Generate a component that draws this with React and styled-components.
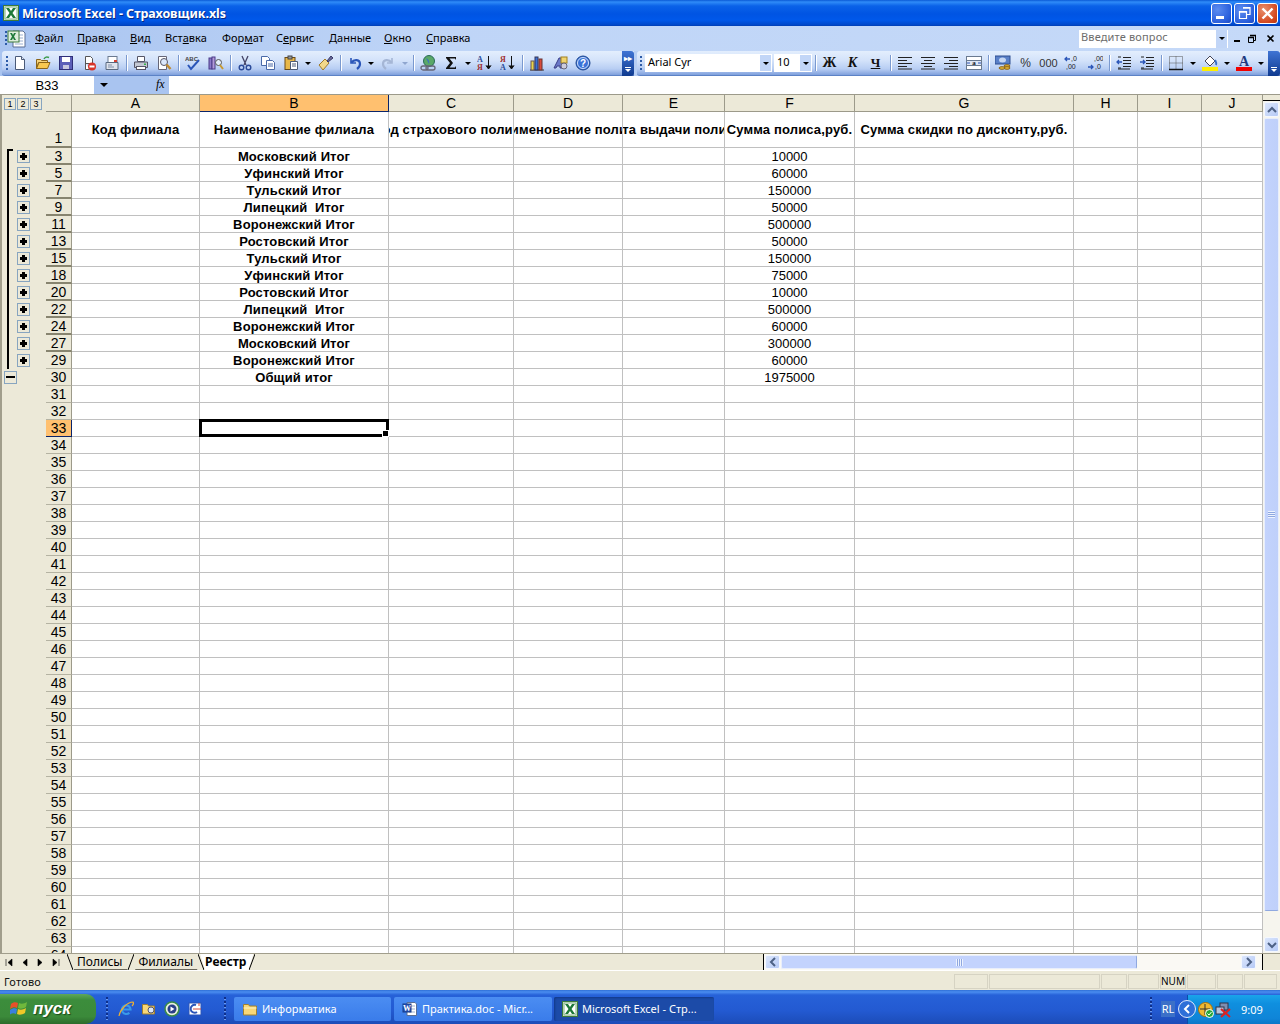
import React from 'react';
import styled, { createGlobalStyle } from 'styled-components';

const GlobalStyle = createGlobalStyle`
  html, body { margin: 0; padding: 0; background: #ece9d8; overflow: hidden; }
  * { box-sizing: border-box; }
`;

const UI = '"Noto Sans", "Liberation Sans", sans-serif';
const CELL = '"Liberation Sans", Arial, sans-serif';

const COLS = [
  { id: 'A', w: 128 }, { id: 'B', w: 189 }, { id: 'C', w: 125 }, { id: 'D', w: 109 }, { id: 'E', w: 102 },
  { id: 'F', w: 130 }, { id: 'G', w: 219 }, { id: 'H', w: 64 }, { id: 'I', w: 64 }, { id: 'J', w: 61 },
];

const SUMMARY = [
  [3, 'Московский Итог', '10000'], [5, 'Уфинский Итог', '60000'], [7, 'Тульский Итог', '150000'],
  [9, 'Липецкий  Итог', '50000'], [11, 'Воронежский Итог', '500000'], [13, 'Ростовский Итог', '50000'],
  [15, 'Тульский Итог', '150000'], [18, 'Уфинский Итог', '75000'], [20, 'Ростовский Итог', '10000'],
  [22, 'Липецкий  Итог', '500000'], [24, 'Воронежский Итог', '60000'], [27, 'Московский Итог', '300000'],
  [29, 'Воронежский Итог', '60000'],
];

const Page = styled.div`
  width: 1280px;
  height: 1024px;
  display: flex;
  flex-direction: column;
  overflow: hidden;
  background: #ece9d8;
`;

/* title bar */
const TitleBar = styled.div`
  height: 26px;
  flex: none;
  display: flex;
  align-items: center;
  padding: 0 2px 0 3px;
  background: linear-gradient(180deg, #0a5ad6 0, #2f8cf8 2px, #0a62e8 6px, #0054e3 14px, #0058ea 20px, #0047c8 25px, #003cb0 26px);
`;
const TitleText = styled.div`
  margin-left: 3px;
  flex: 1;
  color: #fff;
  font: bold 12.5px ${UI};
  letter-spacing: -0.04px;
  text-shadow: 1px 1px 0 #0a2a80;
`;
const WinButton = styled.div`
  width: 21px;
  height: 21px;
  margin-left: 2px;
  border: 1px solid #fff;
  border-radius: 3px;
  display: flex;
  align-items: center;
  justify-content: center;
  background: ${p => p.$close
    ? 'radial-gradient(circle at 30% 30%, #e8906e, #d4481f 70%, #b8350f)'
    : 'radial-gradient(circle at 30% 30%, #5c8cf0, #2a5fdc 70%, #1c48c0)'};
`;

/* menu */
const MenuBar = styled.div`
  height: 25px;
  flex: none;
  display: flex;
  align-items: center;
  padding: 0 4px 0 5px;
  background: linear-gradient(90deg, #a9c4f0 0, #bfd5f7 35%, #c5d9f8 100%);
  font: 11px ${UI};
  color: #000;
`;
const Grip = styled.div`
  width: 2px;
  height: ${p => p.$h || 15}px;
  flex: none;
  background: repeating-linear-gradient(180deg, #2c5ba8 0, #2c5ba8 2px, transparent 2px, transparent 4px);
`;
const MenuList = styled.div`
  display: flex;
  margin-left: 8px;
  margin-bottom: 2px;
`;
const MenuItem = styled.span`
  width: ${p => p.$w}px;
  flex: none;
  line-height: 15px;
  white-space: nowrap;
`;
const HelpBox = styled.div`
  margin-left: auto;
  width: 149px;
  height: 18px;
  background: #fff;
  display: flex;
  align-items: center;
  padding: 0 1px 0 2px;
  color: #6d6d6d;
  font: 11px ${UI};
  letter-spacing: 0.15px;
`;
const BoxText = styled.span`
  padding-bottom: 4px;
`;
const ComboDrop = styled.div`
  margin-left: auto;
  align-self: stretch;
  width: 11px;
  flex: none;
  background: #c2d6f7;
  display: flex;
  align-items: center;
  justify-content: center;
  &::after {
    content: '';
    border-left: 3px solid transparent;
    border-right: 3px solid transparent;
    border-top: 3px solid #000;
  }
`;
const DocBtn = styled.svg`
  flex: none;
  margin-left: ${p => p.$ml}px;
`;

/* toolbars */
const ToolRow = styled.div`
  height: 25px;
  flex: none;
  display: flex;
  background: linear-gradient(90deg, #a9c4f0 0, #c5d9f8 100%);
`;
const ToolBand = styled.div`
  width: ${p => p.$w}px;
  margin-left: ${p => p.$ml || 0}px;
  padding-left: ${p => p.$pl}px;
  height: 25px;
  display: flex;
  align-items: center;
  background: linear-gradient(180deg, #e3eefd 0, #d3e2fa 40%, #b7cdf3 75%, #7fa0dc 100%);
  border-radius: 3px 0 0 3px;
  border-bottom: 1px solid #5c82c6;
`;
const Tool = styled.div`
  width: 23px;
  height: 18px;
  flex: none;
  display: flex;
  align-items: center;
  justify-content: center;
  font: ${p => p.$font || `11px ${UI}`};
  color: ${p => p.$c || '#111'};
`;
const Sep = styled.div`
  width: 6px;
  height: 16px;
  flex: none;
  display: flex;
  justify-content: center;
  &::after {
    content: '';
    width: 1px;
    background: #7a99cf;
    box-shadow: 1px 0 0 #fff;
  }
`;
const Drop = styled.div`
  width: ${p => p.$w || 11}px;
  flex: none;
  display: flex;
  justify-content: center;
  &::after {
    content: '';
    border-left: 3px solid transparent;
    border-right: 3px solid transparent;
    border-top: 3px solid ${p => p.$dim ? '#8fa6cf' : '#000'};
  }
`;
const Overflow = styled.div`
  margin-left: auto;
  align-self: stretch;
  margin-bottom: -1px;
  width: ${p => p.$w}px;
  flex: none;
  background: linear-gradient(180deg, #3f74d4, #0f3a8f);
  border-radius: 0 3px 3px 0;
  display: flex;
  flex-direction: column;
  align-items: center;
  padding: 4px 0 4px;
  gap: 1px;
  color: #fff;
  font: bold 8px ${UI};
  line-height: 6px;
  &::before {
    order: 1;
    content: '';
    margin-top: auto;
    width: 6px;
    height: 1px;
    background: #fff;
  }
  &::after {
    order: 2;
    content: '';
    border-left: 3px solid transparent;
    border-right: 3px solid transparent;
    border-top: 3px solid #fff;
  }
`;
const Combo = styled.div`
  margin-left: ${p => p.$ml}px;
  width: ${p => p.$w}px;
  height: 18px;
  flex: none;
  background: #fff;
  border: 1px solid #fff;
  display: flex;
  align-items: center;
  padding-left: 2px;
  font: 11px ${UI};
  color: #000;
`;

/* formula bar */
const FormulaBar = styled.div`
  height: 18px;
  flex: none;
  display: flex;
  background: #fff;
`;
const NameBox = styled.div`
  width: 94px;
  background: #fff;
  font: 13px ${CELL};
  display: flex;
  align-items: center;
  justify-content: center;
`;
const FormulaTools = styled.div`
  width: 75px;
  background: #a9c4f0;
  display: flex;
  align-items: center;
  padding-left: 6px;
`;
const FxLabel = styled.span`
  margin-left: 48px;
  padding-bottom: 2px;
  font: italic 12px "Liberation Serif", serif;
`;
const SmallDrop = styled.div`
  border-left: 4px solid transparent;
  border-right: 4px solid transparent;
  border-top: 4px solid #000;
`;

/* sheet */
const SheetArea = styled.div`
  height: 859px;
  flex: none;
  display: flex;
  border-top: 1px solid #9c9a8a;
  background: #ece9d8;
`;
const SheetBody = styled.div`
  flex: 1;
  min-width: 0;
  overflow: hidden;
  display: flex;
  flex-direction: column;
`;
const Row = styled.div`
  display: flex;
  flex: none;
  height: ${p => p.$h}px;
`;
const Outline = styled.div`
  width: 46px;
  flex: none;
  background: #ece9d8;
  position: relative;
  border-left: 2px solid #a19e8c;
  display: flex;
  align-items: center;
  padding-left: ${p => p.$pl ?? 15}px;
`;
const LevelBtn = styled.div`
  width: 12px;
  height: 12px;
  margin-right: 1px;
  background: #ece9d8;
  border: 1px solid #87a5c0;
  font: 9px ${CELL};
  text-align: center;
  line-height: 10px;
  color: #000;
`;
const OutlineBar = styled.div`
  position: absolute;
  left: 5px;
  width: 2px;
  top: ${p => p.$first ? 1 : 0}px;
  bottom: 0;
  background: #000;
  ${p => p.$first && `&::after { content: ''; position: absolute; left: 0; top: 0; width: 6px; height: 2px; background: #000; }`}
`;
const Toggle = styled.div`
  width: 13px;
  height: 13px;
  background: #ece9d8;
  border: 1px solid #87a5c0;
  position: relative;
  &::before {
    content: '';
    position: absolute;
    left: 2px;
    right: 2px;
    top: 4px;
    height: 3px;
    background: #000;
    ${p => p.$minus && 'left: 1px; right: 1px; height: 2px; top: 4px;'}
  }
  ${p => !p.$minus && `&::after {
    content: '';
    position: absolute;
    top: 2px;
    bottom: 2px;
    left: 4px;
    width: 3px;
    background: #000;
  }`}
`;
const RowHead = styled.div`
  width: 26px;
  flex: none;
  background: ${p => p.$sel ? '#ffc06f' : '#ece9d8'};
  border-right: 1px solid ${p => p.$sel ? '#0a246a' : '#9c9a8a'};
  border-bottom: ${p => p.$gap ? '2px solid #87846f' : p.$sel ? '1px solid #0a246a' : '1px solid #b5b3a2'};
  font: 14px ${CELL};
  color: #000;
  display: flex;
  align-items: ${p => p.$low ? 'flex-end' : 'center'};
  justify-content: center;
  overflow: hidden;
`;
const ColHead = styled.div`
  width: ${p => p.$w}px;
  flex: none;
  background: ${p => p.$sel ? '#ffc06f' : '#ece9d8'};
  border-right: 1px solid ${p => p.$sel ? '#0a246a' : '#9c9a8a'};
  border-bottom: 1px solid ${p => p.$sel ? '#0a246a' : '#9c9a8a'};
  font: 14px ${CELL};
  color: #000;
  display: flex;
  align-items: center;
  justify-content: center;
`;
const Cell = styled.div`
  width: ${p => p.$w}px;
  flex: none;
  background: #fff;
  border-right: 1px solid #c0c0c0;
  border-bottom: 1px solid #c0c0c0;
  display: flex;
  align-items: center;
  justify-content: center;
  white-space: pre;
  overflow: hidden;
  font: ${p => p.$bold ? `bold 13px ${CELL}` : `13px ${CELL}`};
  letter-spacing: ${p => p.$bold ? '0.15px' : 0};
  color: #000;
  position: relative;
`;
const SelBox = styled.div`
  position: absolute;
  inset: -1px;
  border: 3px solid #000;
  pointer-events: none;
  z-index: 2;
  &::after {
    content: '';
    position: absolute;
    right: -3px;
    bottom: -3px;
    width: 5px;
    height: 5px;
    background: #000;
    border: 1px solid #fff;
  }
`;
const SelCell = styled(Cell)`
  overflow: visible;
  z-index: 2;
`;

/* scrollbars */
const VScroll = styled.div`
  width: 17px;
  flex: none;
  display: flex;
  flex-direction: column;
  align-items: stretch;
  background: #f6f5ee;
`;
const Split = styled.div`
  height: 6px;
  flex: none;
  background: #ece9d8;
  border-bottom: 1px solid #000;
`;
const ScrollBtn = styled.div`
  height: ${p => p.$h || 15}px;
  width: ${p => p.$w || 15}px;
  margin: 1px;
  flex: none;
  background: linear-gradient(135deg, #dbe6fc, #b6caf6);
  border: 1px solid #f4f7fe;
  border-radius: 2px;
  display: flex;
  align-items: center;
  justify-content: center;
`;
const VThumb = styled.div`
  flex: none;
  height: 793px;
  margin: 0 1px;
  background: linear-gradient(90deg, #c3d3fd, #bfd0fa);
  border: 1px solid #e8eefc;
  border-bottom-color: #8fa8e0;
  border-radius: 2px;
  display: flex;
  align-items: center;
  justify-content: center;
`;
const VGrow = styled.div`
  flex: 1;
`;
const GripV = styled.div`
  width: 7px;
  height: 7px;
  background: repeating-linear-gradient(180deg, #eef3fe 0, #eef3fe 1px, #8fa8e0 1px, #8fa8e0 2px);
`;
const GripH = styled.div`
  width: 7px;
  height: 7px;
  background: repeating-linear-gradient(90deg, #eef3fe 0, #eef3fe 1px, #8fa8e0 1px, #8fa8e0 2px);
`;

/* tabs row */
const TabRow = styled.div`
  height: 18px;
  flex: none;
  display: flex;
  background: #ece9d8;
  border-top: 1px solid #a19e8c;
  border-bottom: 1px solid #fff;
`;
const TabNav = styled.div`
  width: 67px;
  flex: none;
  display: flex;
  align-items: center;
  justify-content: space-around;
  padding: 0 3px 0 1px;
`;
const Tab = styled.div`
  height: 16px;
  padding: 0 ${p => p.$pr}px 0 ${p => p.$pl}px;
  margin: 0 -4px;
  background: ${p => p.$active ? '#fff' : 'transparent'};
  box-shadow: ${p => p.$active ? 'none' : 'inset 0 -1px 0 #6a685c'};
  clip-path: polygon(0 0, 100% 0, calc(100% - 5px) 100%, 5px 100%);
  font: ${p => p.$active ? 'bold' : 'normal'} 12px ${UI};
  line-height: 15px;
  color: #000;
  white-space: nowrap;
`;
const TabWrap = styled.div`
  display: flex;
  flex: 1;
  align-items: flex-start;
`;
const TabEdge = styled.svg`
  flex: none;
  position: relative;
  z-index: 1;
`;
const HScroll = styled.div`
  width: 500px;
  flex: none;
  height: 16px;
  display: flex;
  align-items: center;
  background: #faf9f4;
  border-left: 1px solid #000;
  border-right: 1px solid #000;
`;
const HThumb = styled.div`
  width: 356px;
  height: 14px;
  margin-right: 103px;
  flex: none;
  background: #c3d3fd;
  border: 1px solid #e8eefc;
  border-right-color: #8fa8e0;
  border-radius: 2px;
  display: flex;
  align-items: center;
  justify-content: center;
`;
const Corner = styled.div`
  width: 17px;
  flex: none;
  background: #ece9d8;
  height: 16px;
`;

/* status */
const StatusBar = styled.div`
  height: 19px;
  flex: none;
  display: flex;
  align-items: center;
  background: #ece9d8;
  padding: 1px 0 0 4px;
  font: 11px ${UI};
  letter-spacing: 0.2px;
  color: #111;
`;
const StatusLabel = styled.span`
  width: 950px;
  flex: none;
`;
const StatusCell = styled.div`
  width: ${p => p.$w}px;
  height: 15px;
  margin-right: 1px;
  flex: none;
  border: 1px solid #d6d3c3;
  font: 10px ${UI};
  letter-spacing: 0;
  text-align: center;
  line-height: 13px;
  color: #000;
`;

/* taskbar */
const Taskbar = styled.div`
  height: 34px;
  flex: none;
  display: flex;
  align-items: center;
  padding-top: 3px;
  background: linear-gradient(180deg, #2f6fd6 0, #4a8df0 2px, #2661d8 5px, #235ad2 60%, #1c4cb8 100%);
`;
const StartBtn = styled.div`
  width: 96px;
  height: 30px;
  flex: none;
  align-self: flex-end;
  display: flex;
  align-items: center;
  padding-left: 10px;
  gap: 5px;
  border-radius: 0 10px 10px 0;
  background: linear-gradient(180deg, #5fa75c 0, #3c8d3c 20%, #3b8a3a 75%, #2c6b2c 100%);
  color: #fff;
  font: italic bold 17px "Liberation Sans", sans-serif;
  text-shadow: 1px 1px 1px #1b4a1b;
`;
const QuickGrip = styled(Grip)`
  background: repeating-linear-gradient(180deg, #0f2f8a 0, #0f2f8a 2px, #6a9af0 2px, #6a9af0 3px, transparent 3px, transparent 4px);
  height: 24px;
  margin-left: ${p => p.$ml}px;
`;
const QuickIcons = styled.div`
  display: flex;
  align-items: center;
  gap: 7px;
  margin-left: 10px;
  width: 106px;
  flex: none;
`;
const TaskBtn = styled.div`
  width: ${p => p.$w}px;
  height: 24px;
  margin-left: ${p => p.$ml || 2}px;
  flex: none;
  display: flex;
  align-items: center;
  gap: 4px;
  padding-left: 8px;
  border-radius: 2px;
  background: ${p => p.$active ? '#1c4ba8' : 'linear-gradient(180deg, #4b8df2, #3a7cea)'};
  box-shadow: ${p => p.$active ? 'inset 1px 1px 2px #123a8a' : 'none'};
  color: #fff;
  font: 11px ${UI};
  white-space: nowrap;
`;
const TrayGrip = styled(QuickGrip)`
  margin-left: auto;
  margin-right: 9px;
`;
const Lang = styled.div`
  width: 14px;
  height: 16px;
  flex: none;
  display: flex;
  align-items: center;
  justify-content: center;
  color: #fff;
  font: 11px ${UI};
  background: #3b70c8;
  margin-right: 12px;
`;
const Tray = styled.div`
  width: 93px;
  height: 29px;
  align-self: flex-end;
  flex: none;
  display: flex;
  align-items: center;
  padding-left: 10px;
  gap: 1px;
  background: linear-gradient(180deg, #1aa4ea 0, #0f8fdf 30%, #0f85d8 80%, #0c77c8 100%);
  border-left: 1px solid #0a4fa8;
  color: #fff;
  font: 11px ${UI};
  position: relative;
`;
const ClockText = styled.span`
  margin-left: 9px;
`;
const TrayChevron = styled.div`
  width: 18px;
  height: 18px;
  border-radius: 50%;
  border: 1px solid #dfe9fb;
  background: #2d6fd8;
  display: flex;
  align-items: center;
  justify-content: center;
  position: absolute;
  left: -10px;
  top: 5px;
`;

/* icons */
const S = ({ children, w = 16, h = 16, vb }) => (
  <svg width={w} height={h} viewBox={vb || `0 0 ${w} ${h}`}>{children}</svg>
);
const XlIcon = () => (
  <S>
    <rect x=".5" y=".5" width="15" height="15" fill="#dfeedd" stroke="#3c7a3c" />
    <rect x="2" y="2" width="12" height="12" fill="#fff" stroke="#7fb07f" />
    <path d="M3 3h3l2 3 2-3h3l-3.500 5L13 13h-3l-2-3-2 3H3l3.500-5z" fill="#1f7a3a" />
  </S>
);
const DocMark = () => (
  <S w={20} h={20}>
    <path d="M6 2h10l2 2v14H6z" fill="#fff" stroke="#5b6f95" />
    <path d="M8 6h8M8 9h8M8 12h8M8 15h8" stroke="#9cb0d0" />
    <rect x="1" y="2" width="11" height="11" fill="#dfeedd" stroke="#3c7a3c" />
    <path d="M3 4h2l1 2 1-2h2l-2 3.500 2 3.500H7L6 9l-1 2H3l2-3.500z" fill="#1f7a3a" />
  </S>
);
const NewIcon = () => <S><path d="M3.500 1.500h6l3 3v10h-9z" fill="#fff" stroke="#4a5a78" /><path d="M9.500 1.500v3h3" fill="#dfe6f3" stroke="#4a5a78" /></S>;
const OpenIcon = () => <S><path d="M1.500 4.500h4l1 1h6v2h-9l-2 6z" fill="#f6d37a" stroke="#8a6418" /><path d="M1.500 13.500l2.500-6h11l-2.500 6z" fill="#f8c850" stroke="#8a6418" /><path d="M9 4c1-2 3-2.500 5-1.500" fill="none" stroke="#3a9a48" strokeWidth="1.500" /></S>;
const SaveIcon = () => <S><rect x="1.500" y="1.500" width="13" height="13" fill="#5c5fb8" stroke="#2f2f78" /><rect x="4" y="2" width="8" height="5" fill="#fff" /><rect x="5" y="10" width="6" height="4" fill="#c8c8e0" /></S>;
const PermIcon = () => <S><path d="M4.500 1.500h5l2 2v5h-7z" fill="#fff" stroke="#555" /><path d="M4.500 8v6.500h4" fill="#fff" stroke="#555" /><circle cx="11" cy="11.500" r="4" fill="#d8342a" /><rect x="8.500" y="10.500" width="5" height="2" fill="#fff" /></S>;
const MailIcon = () => <S><rect x="4" y="1.500" width="9" height="6" fill="#fff" stroke="#6a7a90" /><path d="M2 7.500h12v7H2z" fill="#dfe3ec" stroke="#5a6a80" /><path d="M10 5h3v2h-3z" fill="#d84030" /><path d="M4 10h4M4 12h6" stroke="#8090a8" /></S>;
const PrintIcon = () => <S><path d="M4.500 1.500h7v5h-7z" fill="#fff" stroke="#556" /><path d="M1.500 7h13v5.500h-13z" fill="#c4c9d4" stroke="#556" /><rect x="3.500" y="11.500" width="9" height="3" fill="#fff" stroke="#556" /><rect x="11" y="8.500" width="2" height="1.500" fill="#38b048" /></S>;
const PreviewIcon = () => <S><path d="M2.500 1.500h8v13h-8z" fill="#fff" stroke="#667" /><circle cx="8" cy="7" r="3.500" fill="#dbe8fb" stroke="#556" /><path d="M10.500 9.500l4 4.500" stroke="#c08a30" strokeWidth="2.500" /></S>;
const SpellIcon = () => <S><text x="0" y="6" fontFamily="Liberation Sans" fontSize="6" fontWeight="bold" fill="#444">ABC</text><path d="M3 10l3 4 8-9" fill="none" stroke="#2a55b8" strokeWidth="2" /></S>;
const ResearchIcon = () => <S><rect x="1" y="3" width="3" height="11" fill="#8a78c8" stroke="#4a3a88" /><rect x="4" y="2" width="3" height="12" fill="#b39ad8" stroke="#4a3a88" /><circle cx="10.500" cy="7.500" r="3" fill="#e4eefb" stroke="#555" /><path d="M12 10l3 4" stroke="#c89a30" strokeWidth="2" /></S>;
const CutIcon = () => <S><path d="M5 1l4 9M11 1l-4 9" stroke="#446" strokeWidth="1.300" /><circle cx="4.500" cy="12.500" r="2.300" fill="none" stroke="#2a4a98" strokeWidth="1.400" /><circle cx="11.500" cy="12.500" r="2.300" fill="none" stroke="#2a4a98" strokeWidth="1.400" /></S>;
const CopyIcon = () => <S><path d="M1.500 1.500h6l2 2v7h-8z" fill="#fff" stroke="#4a6aa8" /><path d="M6.500 5.500h6l2 2v7h-8z" fill="#fff" stroke="#4a6aa8" /><path d="M8 9h5M8 11h5" stroke="#4a6aa8" /></S>;
const PasteIcon = () => <S><rect x="2" y="2.500" width="10" height="12" fill="#e8b84a" stroke="#6a4a18" /><rect x="5" y="1" width="4" height="3" fill="#999" stroke="#444" /><path d="M7.500 6.500h7v8h-7z" fill="#fff" stroke="#4a5a78" /><path d="M9 9h4M9 11h4" stroke="#4a5a78" /></S>;
const BrushIcon = () => <S><path d="M1 10l6-6 4 4-6 7z" fill="#f2d88a" stroke="#a07a28" /><path d="M9 6l4-5 2 2-5 4z" fill="#6a6a9a" stroke="#3a3a68" /></S>;
const UndoIcon = () => <S><path d="M4 3v5h5" fill="none" stroke="#2a55b8" strokeWidth="1.600" /><path d="M4.500 7.500C7 4 13 4 13 9c0 2-1 3.500-3 5" fill="none" stroke="#2a55b8" strokeWidth="2.200" /></S>;
const RedoIcon = () => <S><path d="M12 3v5H7" fill="none" stroke="#a5b6d5" strokeWidth="1.600" /><path d="M11.500 7.500C9 4 3 4 3 9c0 2 1 3.500 3 5" fill="none" stroke="#a5b6d5" strokeWidth="2.200" /></S>;
const LinkIcon = () => <S><circle cx="9" cy="6" r="5.500" fill="#5aa868" stroke="#2a6a58" /><path d="M6 3c2 1 4 3 3 6" fill="#3a70c0" /><rect x="1" y="11" width="7" height="4" rx="2" fill="none" stroke="#667" strokeWidth="1.300" /><rect x="6" y="11" width="9" height="4" rx="2" fill="none" stroke="#667" strokeWidth="1.300" /></S>;
const SigmaIcon = () => <S><path d="M3 2h10v3l-1-1.500H6.500L10 8l-3.500 4.500H12l1-1.500v3H3v-1l4-5-4-5z" fill="#111" /></S>;
const SortIcon = ({ top, bottom, topC, botC }) => <S><text x="0" y="7" fontFamily="Liberation Serif" fontSize="8" fontWeight="bold" fill={topC}>{top}</text><text x="0" y="15" fontFamily="Liberation Serif" fontSize="8" fontWeight="bold" fill={botC}>{bottom}</text><path d="M11.500 1v12M9 10.500l2.500 3.500 2.500-3.500" fill="#111" stroke="#111" /></S>;
const ChartIcon = () => <S><path d="M1 15h14" stroke="#333" /><rect x="2" y="6" width="3" height="9" fill="#e9d44a" stroke="#655" /><rect x="6" y="2" width="3" height="13" fill="#3a70d8" stroke="#335" /><rect x="10" y="4" width="3" height="11" fill="#d84a3a" stroke="#633" /></S>;
const DrawIcon = () => <S><path d="M2 13L7 3h3v10H8v-2H5l-1 2z" fill="#6a78c8" stroke="#3a3f88" /><rect x="9" y="2" width="6" height="6" fill="#f0d470" stroke="#a08020" /><circle cx="12" cy="11" r="3" fill="#ccd" stroke="#667" /></S>;
const HelpIcon = () => <S><circle cx="8" cy="8" r="7" fill="#3a72d8" stroke="#1f478f" /><circle cx="8" cy="8" r="5.500" fill="none" stroke="#cfe0fa" /><text x="8" y="11.500" textAnchor="middle" fontFamily="Liberation Sans" fontSize="10" fontWeight="bold" fill="#fff">?</text></S>;
const AlignIcon = ({ kind }) => {
  const lines = kind === 'left' ? ['M1 2.500h14', 'M1 5.500h9', 'M1 8.500h14', 'M1 11.500h9', 'M1 14h14']
    : kind === 'center' ? ['M1 2.500h14', 'M4 5.500h8', 'M1 8.500h14', 'M4 11.500h8', 'M1 14h14']
      : ['M1 2.500h14', 'M6 5.500h9', 'M1 8.500h14', 'M6 11.500h9', 'M1 14h14'];
  return <S><path d={lines.join('')} stroke="#222" /></S>;
};
const MergeIcon = () => <S><rect x=".5" y="1.500" width="15" height="13" fill="#fff" stroke="#6a7a90" /><rect x=".5" y="5.500" width="15" height="5" fill="#dfe6f3" stroke="#6a7a90" /><text x="8" y="10" textAnchor="middle" fontFamily="Liberation Serif" fontWeight="bold" fontSize="7" fill="#111">a</text><path d="M1 8h3M15 8h-3" stroke="#2a55b8" /></S>;
const CurrencyIcon = () => <S><rect x="0" y="1" width="15" height="8" fill="#5a80c8" stroke="#2f4f90" /><ellipse cx="7.500" cy="5" rx="3.500" ry="2.500" fill="#c5d6f2" /><ellipse cx="12" cy="11" rx="3" ry="1.300" fill="#e8b838" stroke="#8a6418" /><ellipse cx="12" cy="13" rx="3" ry="1.300" fill="#e8b838" stroke="#8a6418" /><ellipse cx="7" cy="13" rx="3" ry="1.300" fill="#e8b838" stroke="#8a6418" /></S>;
const DecIcon = ({ a, b, flip }) => <S><path d={flip ? 'M1 12h5M4 10l2 2-2 2' : 'M1 4h5M3 2L1 4l2 2'} stroke="#2a55b8" fill="none" strokeWidth="1.300" /><text x="7" y="6" fontFamily="Liberation Sans" fontSize="7" fill="#222">{a}</text><text x={flip ? 8 : 2} y="14" fontFamily="Liberation Sans" fontSize="7" fill="#222">{b}</text></S>;
const IndentIcon = ({ flip }) => <S><path d="M7 2.500h8M7 5.500h8M7 8.500h8M7 11.500h8M2 14h12M2 2h3M2 13h3" stroke="#222" /><path d={flip ? 'M1 7h5M4 5l2 2-2 2' : 'M1 7h5M3 5L1 7l2 2'} stroke="#2a55b8" fill="none" strokeWidth="1.300" /></S>;
const BorderIcon = () => <S><path d="M1.500 1.500h13v13h-13zM1.500 8h13M8 1.500v13" fill="none" stroke="#555" strokeDasharray="1 1" /><path d="M1 14.500h14" stroke="#111" strokeWidth="1.500" /></S>;
const FillIcon = () => <S><path d="M3 6l5-5 5 5-5 5z" fill="#fff" stroke="#445" /><path d="M13 5c1 2 2 3 1 5" stroke="#3a70c8" strokeWidth="2" fill="none" /><rect x="0" y="12" width="16" height="4" fill="#ffef00" /></S>;
const FontColorIcon = () => <S><text x="8" y="11" textAnchor="middle" fontFamily="Liberation Serif" fontWeight="bold" fontSize="14" fill="#1f3a80">A</text><rect x="0" y="12" width="16" height="4" fill="#f00000" /></S>;
const Chevron = ({ dir = 'up', c = '#4d6185' }) => {
  const d = { up: 'M1 6l4-4 4 4', down: 'M1 2l4 4 4-4', left: 'M6 1L2 5l4 4', right: 'M2 1l4 4-4 4' }[dir];
  return <S w={10} h={10} vb={dir === 'up' || dir === 'down' ? '0 0 10 8' : '0 0 8 10'}><path d={d} fill="none" stroke={c} strokeWidth="2" /></S>;
};
const NavArrow = ({ d }) => <S w={9} h={9}><path d={d} fill="#000" stroke="#000" strokeWidth=".6" /></S>;
const FolderIcon = () => <S><path d="M1.500 3.500h5l1 1.500h7v9h-13z" fill="#f8d878" stroke="#a08030" /><path d="M1.500 7h13" stroke="#fff2c0" /></S>;
const WordIcon = () => <S><path d="M5 1.500h8l1.500 1.500v11.500H5z" fill="#fff" stroke="#5b6f95" /><path d="M7 5h6M7 8h6M7 11h6" stroke="#9cb0d0" /><rect x="1" y="3" width="8" height="8" fill="#2a55b8" stroke="#153a88" /><text x="5" y="10" textAnchor="middle" fontFamily="Liberation Serif" fontSize="8" fontWeight="bold" fill="#fff">W</text></S>;
const FlagIcon = () => <S w={18} h={18}><path d="M1 4c2-2 5-2 7-1l-1 5C5 7 3 7 0 9z" fill="#e8502a" /><path d="M9 3c2 1 5 1 8-1l-1 5c-3 2-6 2-8 1z" fill="#6fb83c" /><path d="M0 10c3-2 5-2 7-1l-1 5c-2-1-4-1-7 1z" fill="#3a80e0" /><path d="M8 9c2 1 5 1 8-1l-1 5c-3 2-6 2-8 1z" fill="#f0c828" /></S>;
const IeIcon = () => <S><path d="M4 8.500h8.500a4.300 4.300 0 1 0-1.200 3.200" fill="none" stroke="#3a9ae8" strokeWidth="2.200" /><path d="M1 15C2 9 9 1 15 1c1 1 0 3-1 4" fill="none" stroke="#f0b030" strokeWidth="1.200" /></S>;
const ExploreIcon = () => <S><path d="M1.500 3.500h5l1 1.500h6v8h-12z" fill="#f8d878" stroke="#a08030" /><circle cx="10" cy="9" r="3" fill="#dbe8fb" stroke="#556" /></S>;
const MediaIcon = () => <S><circle cx="8" cy="8" r="7" fill="#e8f0e0" stroke="#3a8a48" strokeWidth="1.500" /><circle cx="8" cy="8" r="4.500" fill="#2a3f88" /><path d="M6.500 5.500l4 2.500-4 2.500z" fill="#fff" /></S>;
const OutlookIcon = () => <S><rect x="2" y="2" width="12" height="12" fill="#fff" stroke="#2a55b8" /><path d="M9 4a4 4 0 1 0 1 7" fill="none" stroke="#2a55b8" strokeWidth="2" /><path d="M6 8h8M12 2v3" stroke="#d84a3a" /></S>;
const ShieldIcon = () => <S><circle cx="7.500" cy="7.500" r="7" fill="#f0b830" stroke="#a07010" /><path d="M7 2v11M2 7h10" stroke="#333" /><circle cx="11.500" cy="11.500" r="4" fill="#28a838" stroke="#fff" /><path d="M9.500 11.500l1.500 1.500 2.500-3" fill="none" stroke="#fff" /></S>;
const NetIcon = () => <S><rect x="5" y="1" width="8" height="7" fill="#7f8fb0" stroke="#334" /><rect x="1" y="5" width="8" height="7" fill="#b7c4dc" stroke="#334" /><path d="M6 7l9 8M15 7l-9 8" stroke="#e02020" strokeWidth="2" /></S>;

const gapRows = new Set([3, 5, 7, 9, 11, 13, 15, 18, 20, 22, 24, 27]);

const HeaderTitles = {
  A: 'Код филиала',
  B: 'Наименование филиала',
  C: 'Код страхового полиса',
  D: 'Наименование полиса',
  E: 'Дата выдачи полиса',
  F: 'Сумма полиса,руб.',
  G: 'Сумма скидки по дисконту,руб.',
};

const DataRow = ({ n, name, sum, first }) => (
  <Row $h={17}>
    <Outline>
      <OutlineBar $first={first} />
      <Toggle />
    </Outline>
    <RowHead $gap={gapRows.has(n)}>{n}</RowHead>
    {COLS.map(c => (
      <Cell key={c.id} $w={c.w} $bold={c.id === 'B'}>
        {c.id === 'B' ? name : c.id === 'F' ? sum : ''}
      </Cell>
    ))}
  </Row>
);

const EmptyRow = ({ n }) => (
  <Row $h={17}>
    <Outline />
    <RowHead $sel={n === 33}>{n}</RowHead>
    {COLS.map(c => (
      n === 33 && c.id === 'B'
        ? <SelCell key={c.id} $w={c.w}><SelBox /></SelCell>
        : <Cell key={c.id} $w={c.w} />
    ))}
  </Row>
);

// пункты меню: ширина, текст до подчёркнутой буквы, сама буква, остаток
const menus = [
  [42, '', 'Ф', 'айл'], [53, '', 'П', 'равка'], [35, '', 'В', 'ид'], [57, 'Вст', 'а', 'вка'], [54, 'Фор', 'м', 'ат'],
  [53, 'С', 'е', 'рвис'], [55, '', 'Д', 'анные'], [42, '', 'О', 'кно'], [50, '', 'С', 'правка'],
];

export default function App() {
  const empties = [];
  for (let i = 31; i <= 64; i++) empties.push(i);
  return (
    <Page>
      <GlobalStyle />
      <TitleBar>
        <XlIcon />
        <TitleText>Microsoft Excel - Страховщик.xls</TitleText>
        <WinButton>
          <S w={19} h={19}><rect x="4" y="12" width="8" height="3" fill="#fff" /></S>
        </WinButton>
        <WinButton>
          <S w={19} h={19}><path d="M8 3.500h7v7h-3M4.500 7.500h7v7h-7z" fill="none" stroke="#fff" strokeWidth="1.200" /><path d="M8 4h7M4.500 8h7" stroke="#fff" strokeWidth="1.500" /></S>
        </WinButton>
        <WinButton $close>
          <S w={19} h={19}><path d="M4.500 4.500l10 10M14.500 4.500l-10 10" stroke="#fff" strokeWidth="2.400" /></S>
        </WinButton>
      </TitleBar>

      <MenuBar>
        <Grip />
        <DocMark />
        <MenuList>
          {menus.map(([w, a, u, b]) => (
            <MenuItem key={a + u + b} $w={w}>{a}<u>{u}</u>{b}</MenuItem>
          ))}
        </MenuList>
        <HelpBox><BoxText>Введите вопрос</BoxText><ComboDrop /></HelpBox>
        <DocBtn $ml={5} width="10" height="10" viewBox="0 0 10 10"><rect x="1" y="6" width="6" height="2" fill="#000" /></DocBtn>
        <DocBtn $ml={4} width="10" height="10" viewBox="0 0 10 10"><path d="M3.500 1.500h5v5h-2M1.500 3.500h5v5h-5z" fill="none" stroke="#000" /><path d="M3 1.500h6M1 3.500h6" stroke="#000" strokeWidth="1.500" /></DocBtn>
        <DocBtn $ml={9} width="10" height="10" viewBox="0 0 10 10"><path d="M1.500 1.500l6 6M7.500 1.500l-6 6" stroke="#000" strokeWidth="1.600" /></DocBtn>
      </MenuBar>

      <ToolRow>
        <ToolBand $w={632} $ml={2} $pl={4}>
          <Grip />
          <Tool><NewIcon /></Tool>
          <Tool><OpenIcon /></Tool>
          <Tool><SaveIcon /></Tool>
          <Tool><PermIcon /></Tool>
          <Tool><MailIcon /></Tool>
          <Sep />
          <Tool><PrintIcon /></Tool>
          <Tool><PreviewIcon /></Tool>
          <Sep />
          <Tool><SpellIcon /></Tool>
          <Tool><ResearchIcon /></Tool>
          <Sep />
          <Tool><CutIcon /></Tool>
          <Tool><CopyIcon /></Tool>
          <Tool><PasteIcon /></Tool>
          <Drop $w={12} />
          <Tool><BrushIcon /></Tool>
          <Sep />
          <Tool><UndoIcon /></Tool>
          <Drop $w={10} />
          <Tool><RedoIcon /></Tool>
          <Drop $dim />
          <Sep />
          <Tool><LinkIcon /></Tool>
          <Tool><SigmaIcon /></Tool>
          <Drop />
          <Tool><SortIcon top="А" bottom="Я" topC="#2a4a98" botC="#a03030" /></Tool>
          <Tool><SortIcon top="Я" bottom="А" topC="#a03030" botC="#2a4a98" /></Tool>
          <Sep />
          <Tool><ChartIcon /></Tool>
          <Tool><DrawIcon /></Tool>
          <Tool><HelpIcon /></Tool>
          <Overflow $w={12}>▸▸</Overflow>
        </ToolBand>
        <ToolBand $w={643} $ml={3} $pl={3}>
          <Grip />
          <Combo $ml={3} $w={127}><BoxText>Arial Cyr</BoxText><ComboDrop /></Combo>
          <Combo $ml={2} $w={38}><BoxText>10</BoxText><ComboDrop /></Combo>
          <Sep />
          <Tool $font={'bold 14px "Liberation Serif", serif'}>Ж</Tool>
          <Tool $font={'italic bold 14px "Liberation Serif", serif'}>К</Tool>
          <Tool $font={'bold 13px "Liberation Serif", serif'}><u>Ч</u></Tool>
          <Sep />
          <Tool><AlignIcon kind="left" /></Tool>
          <Tool><AlignIcon kind="center" /></Tool>
          <Tool><AlignIcon kind="right" /></Tool>
          <Tool><MergeIcon /></Tool>
          <Sep />
          <Tool><CurrencyIcon /></Tool>
          <Tool $font={`12px ${CELL}`} $c="#333">%</Tool>
          <Tool $font={`11px ${CELL}`} $c="#333">000</Tool>
          <Tool><DecIcon a=",0" b=",00" /></Tool>
          <Tool><DecIcon a=",00" b=",0" flip /></Tool>
          <Sep />
          <Tool><IndentIcon /></Tool>
          <Tool><IndentIcon flip /></Tool>
          <Sep />
          <Tool><BorderIcon /></Tool>
          <Drop />
          <Tool><FillIcon /></Tool>
          <Drop />
          <Tool><FontColorIcon /></Tool>
          <Drop />
          <Overflow $w={12} />
        </ToolBand>
      </ToolRow>

      <FormulaBar>
        <NameBox>B33</NameBox>
        <FormulaTools>
          <SmallDrop />
          <FxLabel>fx</FxLabel>
        </FormulaTools>
      </FormulaBar>

      <SheetArea>
        <SheetBody>
          <Row $h={17}>
            <Outline $pl={2}>
              <LevelBtn>1</LevelBtn><LevelBtn>2</LevelBtn><LevelBtn>3</LevelBtn>
            </Outline>
            <ColHead $w={26} />
            {COLS.map(c => <ColHead key={c.id} $w={c.w} $sel={c.id === 'B'}>{c.id}</ColHead>)}
          </Row>
          <Row $h={36}>
            <Outline />
            <RowHead $low $gap>1</RowHead>
            {COLS.map(c => <Cell key={c.id} $w={c.w} $bold>{HeaderTitles[c.id] || ''}</Cell>)}
          </Row>
          {SUMMARY.map(([n, name, sum], i) => <DataRow key={i} n={n} name={name} sum={sum} first={i === 0} />)}
          <Row $h={17}>
            <Outline $pl={2}><Toggle $minus /></Outline>
            <RowHead>30</RowHead>
            {COLS.map(c => (
              <Cell key={c.id} $w={c.w} $bold={c.id === 'B'}>
                {c.id === 'B' ? 'Общий итог' : c.id === 'F' ? '1975000' : ''}
              </Cell>
            ))}
          </Row>
          {empties.map(n => <EmptyRow key={n} n={n} />)}
        </SheetBody>
        <VScroll>
          <Split />
          <ScrollBtn><Chevron dir="up" /></ScrollBtn>
          <VThumb><GripV /></VThumb>
          <VGrow />
          <ScrollBtn><Chevron dir="down" /></ScrollBtn>
        </VScroll>
      </SheetArea>

      <TabRow>
        <TabNav>
          <NavArrow d="M2 1v7M8 1L4 4.500 8 8z" />
          <NavArrow d="M7 1L3 4.500 7 8z" />
          <NavArrow d="M2 1l4 3.500L2 8z" />
          <NavArrow d="M7 1v7M1 1l4 3.500L1 8z" />
        </TabNav>
        <TabWrap>
          <TabEdge width="6" height="16" viewBox="0 0 6 16"><path d="M0 0l6 16" stroke="#000" /></TabEdge>
          <Tab $pl={8} $pr={10}>Полисы</Tab>
          <TabEdge width="6" height="16" viewBox="0 0 6 16"><path d="M6 0L0 16" stroke="#000" /></TabEdge>
          <Tab $pl={8} $pr={9}>Филиалы</Tab>
          <TabEdge width="6" height="16" viewBox="0 0 6 16"><path d="M0 0l6 16" stroke="#000" /></TabEdge>
          <Tab $active $pl={5} $pr={7}>Реестр</Tab>
          <TabEdge width="6" height="16" viewBox="0 0 6 16"><path d="M6 0L0 16" stroke="#000" /></TabEdge>
        </TabWrap>
        <HScroll>
          <ScrollBtn $h={14} $w={15}><Chevron dir="left" /></ScrollBtn>
          <HThumb><GripH /></HThumb>
          <ScrollBtn $h={14} $w={15}><Chevron dir="right" /></ScrollBtn>
        </HScroll>
        <Corner />
      </TabRow>

      <StatusBar>
        <StatusLabel>Готово</StatusLabel>
        <StatusCell $w={34} />
        <StatusCell $w={111} />
        <StatusCell $w={26} />
        <StatusCell $w={31} />
        <StatusCell $w={26}>NUM</StatusCell>
        <StatusCell $w={29} />
        <StatusCell $w={26} />
        <StatusCell $w={33} />
      </StatusBar>

      <Taskbar>
        <StartBtn><FlagIcon />пуск</StartBtn>
        <QuickGrip $ml={10} />
        <QuickIcons>
          <IeIcon /><ExploreIcon /><MediaIcon /><OutlookIcon />
        </QuickIcons>
        <QuickGrip $ml={0} />
        <TaskBtn $w={157} $ml={8}><FolderIcon />Информатика</TaskBtn>
        <TaskBtn $w={158} $ml={3}><WordIcon />Практика.doc - Micr...</TaskBtn>
        <TaskBtn $w={160} $ml={2} $active><XlIcon />Microsoft Excel - Стр...</TaskBtn>
        <TrayGrip $ml={0} />
        <Lang>RL</Lang>
        <Tray>
          <TrayChevron><Chevron dir="left" c="#fff" /></TrayChevron>
          <ShieldIcon /><NetIcon />
          <ClockText>9:09</ClockText>
        </Tray>
      </Taskbar>
    </Page>
  );
}
